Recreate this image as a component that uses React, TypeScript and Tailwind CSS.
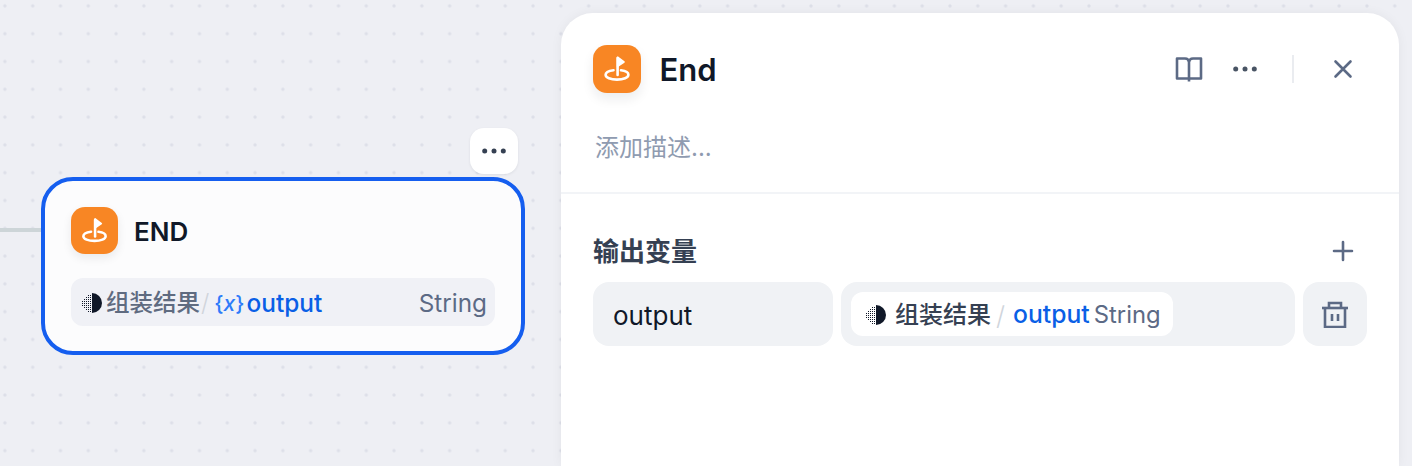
import React from 'react';

const FlagIcon = () => (
  <svg viewBox="0 0 48 48" className="h-full w-full" fill="none">
    <path d="M24.6 12.2 L31 17 L24.6 21.4 Z" fill="white" stroke="white" strokeWidth="1.6" strokeLinejoin="round" />
    <path d="M24.6 13 V30" stroke="white" strokeWidth="2.6" strokeLinecap="round" />
    <path
      d="M20.5 25.2 C15.4 25.8 12.6 27.6 12.6 29.8 C12.6 32.6 17.6 34.6 24 34.6 C30.4 34.6 35.4 32.6 35.4 29.8 C35.4 27.6 32.6 25.8 28 25.3"
      stroke="white"
      strokeWidth="2.6"
      strokeLinecap="round"
    />
  </svg>
);

// half moon logo of the source node
const NodeLogo = () => {
  const cols = [
    { x: 0, ys: [8, 10, 12] },
    { x: 2, ys: [6, 8, 10, 12, 14] },
    { x: 4, ys: [4, 6, 8, 10, 12, 14, 16] },
    { x: 6, ys: [2, 4, 6, 8, 10, 12, 14, 16, 18] },
    { x: 8, ys: [2, 4, 6, 8, 10, 12, 14, 16, 18] },
  ];
  return (
    <svg viewBox="0 0 21 20" className="h-5 w-[21px] shrink-0">
      {cols.map((c) =>
        c.ys.map((y) => <rect key={`${c.x}-${y}`} x={c.x} y={y} width="1" height="1" fill="#101828" shapeRendering="crispEdges" />),
      )}
      <path d="M10 0 A10 10 0 0 1 10 20 Z" fill="#101828" />
    </svg>
  );
};

const MoreDots = ({ color }: { color: string }) => (
  <svg viewBox="0 0 28 28" className="h-7 w-7">
    <circle cx="4.7" cy="14" r="2.5" fill={color} />
    <circle cx="14" cy="14" r="2.5" fill={color} />
    <circle cx="23.3" cy="14" r="2.5" fill={color} />
  </svg>
);

export default function App() {
  return (
    <div
      className="relative flex h-[466px] w-[1412px] justify-end overflow-hidden bg-[#eeeff4] bg-[radial-gradient(circle,#dddfe8_1px,transparent_2.2px)] bg-[size:27.8px_27.8px] bg-[position:-9px_-8px] pr-[13px] pt-[13px] font-['Inter','Noto_Sans_CJK_SC',sans-serif]"
    >
      {/* edge coming into the node */}
      <div className="absolute left-0 top-[228px] h-1 w-[42px] bg-[#cdd5d8]" />

      {/* node actions */}
      <div className="absolute left-[470px] top-[128px] flex h-[46px] w-[48px] items-center justify-center rounded-[14px] bg-white shadow-[0_1px_3px_rgba(16,24,40,0.08)]">
        <MoreDots color="#354052" />
      </div>

      {/* node */}
      <div className="absolute left-[41px] top-[177px] h-[178px] w-[484px] rounded-[32px] border-4 border-[#155eef] bg-[#fcfcfd] px-[26px] pt-[26px]">
        <div className="flex h-[47px] items-center gap-4">
          <div className="h-[47px] w-[47px] rounded-[14px] bg-[#f88624] shadow-[0_4px_10px_rgba(16,24,40,0.08)]">
            <FlagIcon />
          </div>
          <span className="pt-0.5 text-[26px] font-semibold leading-none text-[#101828]">END</span>
        </div>
        <div className="mt-6 flex h-12 items-center rounded-xl bg-[#f0f1f6] pl-[11px] pr-2 pt-0.5">
          <NodeLogo />
          <span className="ml-[3px] text-[23.5px] font-medium text-[#5f6b80]">组装结果</span>
          <span className="ml-px text-[24px] font-light text-[#d0d5dc]">/</span>
          <span className="ml-[5px] text-[21px] font-medium leading-none text-[#2e7bfa]">
            {'{'}
            <i>x</i>
            {'}'}
          </span>
          <span className="ml-0.5 text-[24.4px] font-medium text-[#0a5fe6]">output</span>
          <span className="ml-auto text-[24.3px] text-[#5c6a85]">String</span>
        </div>
      </div>

      {/* panel */}
      <div className="relative z-10 w-[838px] rounded-t-[32px] rounded-b-none bg-white shadow-[0_0_12px_rgba(16,24,40,0.05)]">
        <div className="flex items-center pl-8 pr-[42px] pt-8">
          <div className="h-12 w-12 rounded-[14px] bg-[#f88624] shadow-[0_6px_12px_rgba(16,24,40,0.08)]">
            <FlagIcon />
          </div>
          <span className="ml-[18.5px] text-[31px] font-semibold leading-none text-[#101828]">End</span>
          <div className="ml-auto flex items-center">
            <svg viewBox="0 0 28 28" className="h-7 w-7" fill="none" stroke="#5c6a85" strokeWidth="2.6" strokeLinejoin="round">
              <path d="M14 7 A4 4 0 0 0 10 3.5 H2 V23.5 H26 V3.5 H18 A4 4 0 0 0 14 7 V26.5" />
            </svg>
            <div className="ml-7">
              <MoreDots color="#495464" />
            </div>
            <div className="ml-[33px] h-7 w-0.5 bg-[#eaecf0]" />
            <svg viewBox="0 0 28 28" className="ml-[35px] h-7 w-7" fill="none" stroke="#5c6a85" strokeWidth="2.6" strokeLinecap="round">
              <path d="M6.5 6.5 L21.5 21.5 M21.5 6.5 L6.5 21.5" />
            </svg>
          </div>
        </div>

        <div className="mt-[37px] pl-[34px] text-[24px] leading-9 text-[#8f9bb0]">添加描述...</div>

        <div className="mt-[26px] border-t-2 border-[#f2f4f7] px-8">
          <div className="flex h-[88px] items-center justify-between pr-[10px] pt-[26px]">
            <span className="text-[26px] font-semibold text-[#354052]">输出变量</span>
            <svg viewBox="0 0 28 28" className="h-7 w-7 shrink-0" fill="none" stroke="#5c6a85" strokeWidth="2.6" strokeLinecap="round">
              <path d="M14 5 V23 M5 14 H23" />
            </svg>
          </div>
          <div className="flex h-16 gap-2">
            <div className="flex w-60 items-center rounded-2xl bg-[#f0f2f5] pl-5 pt-0.5 text-[26px] text-[#101828]">output</div>
            <div className="flex w-[454px] items-center rounded-2xl bg-[#f0f2f5] px-[10px]">
              <div className="flex h-11 w-[322px] items-center rounded-xl bg-white pl-[15px] pt-0.5">
                <NodeLogo />
                <span className="ml-2 text-[24px] font-medium text-[#354052]">组装结果</span>
                <span className="ml-[5px] text-[26px] font-light text-[#d0d5dc]">/</span>
                <span className="ml-2 text-[24.7px] font-medium text-[#0a5fe6]">output</span>
                <span className="ml-1 text-[23.8px] text-[#5c6a85]">String</span>
              </div>
            </div>
            <div className="flex w-16 items-center justify-center rounded-2xl bg-[#f0f2f5]">
              <svg viewBox="0 0 28 28" className="h-7 w-7" fill="none" stroke="#5c6a85" strokeWidth="2.6">
                <path d="M1 8 H27" />
                <path d="M8 8 V3 H20 V8" />
                <path d="M4 8 V27 H24 V8" />
                <path d="M11 14 V21 M17 14 V21" />
              </svg>
            </div>
          </div>
        </div>
      </div>
    </div>
  );
}
